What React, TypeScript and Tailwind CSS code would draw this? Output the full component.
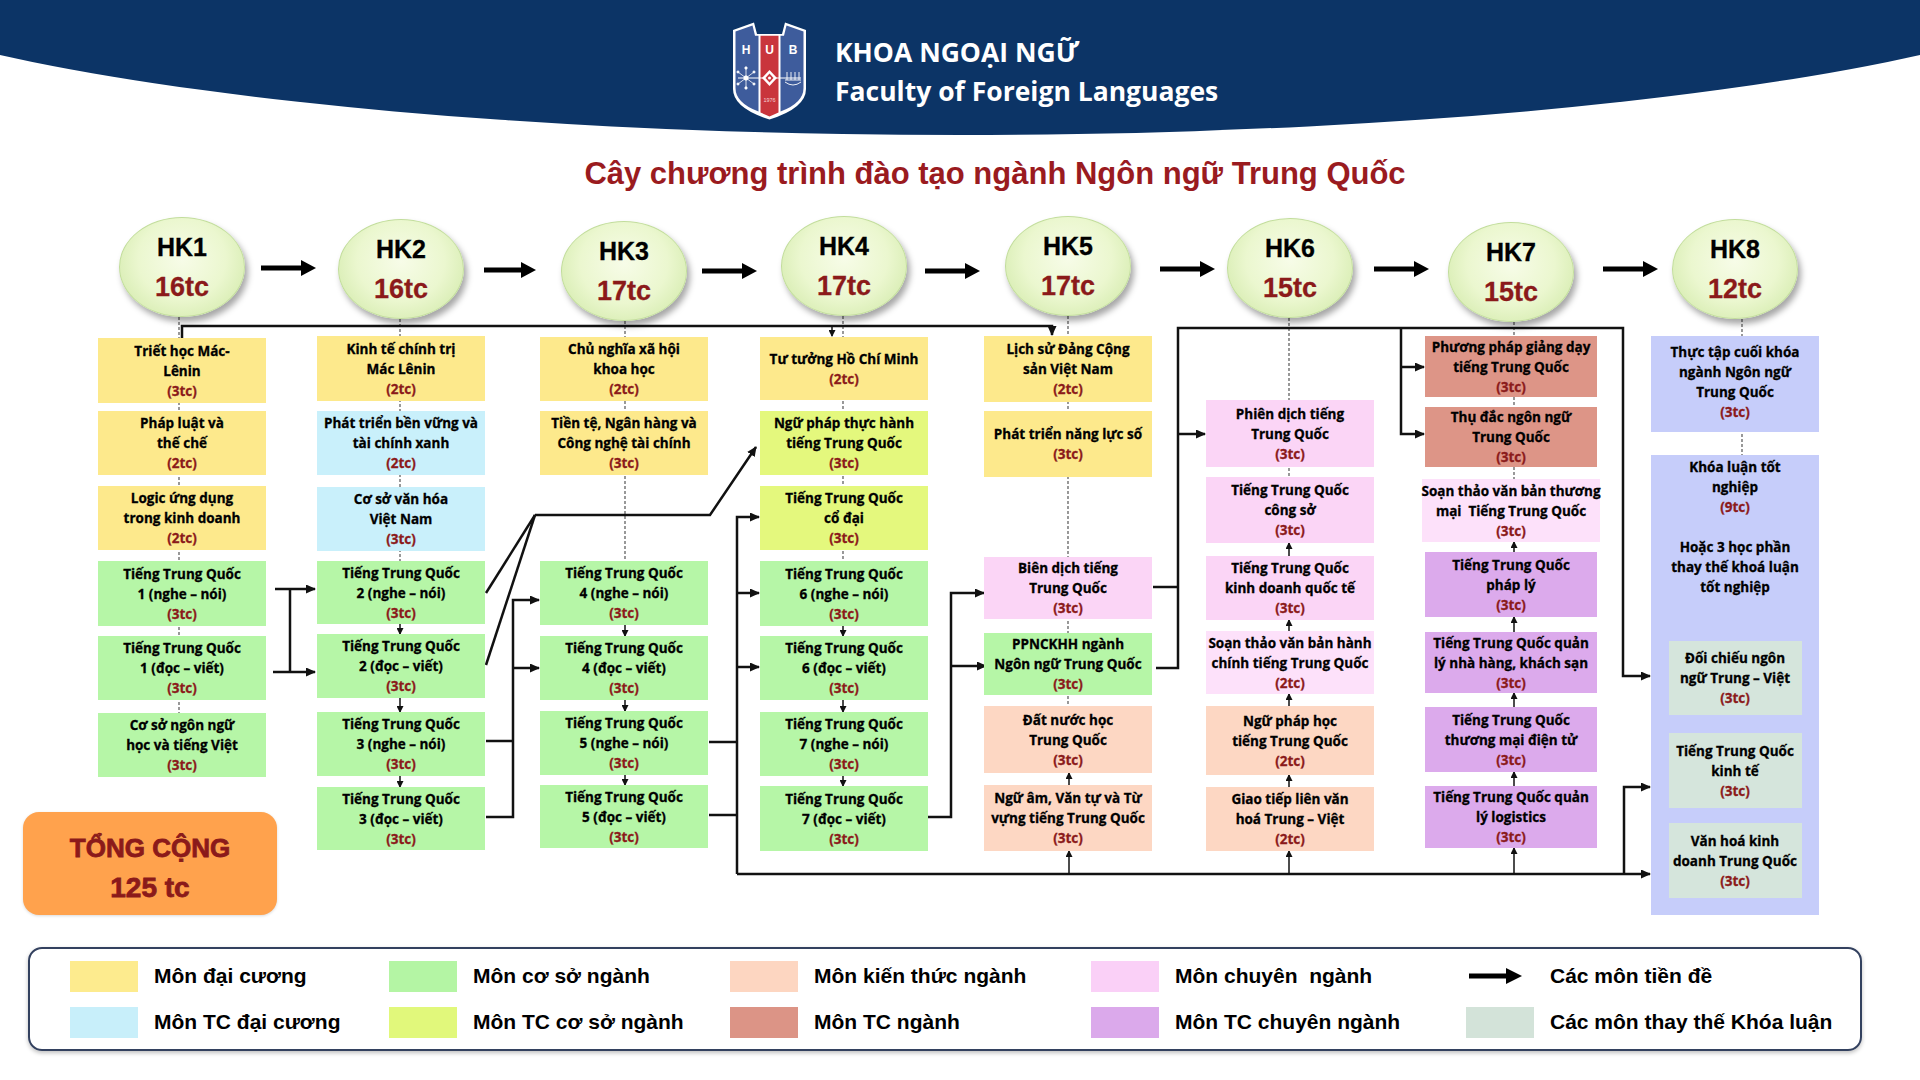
import React from "react";

type Box = { lines: string[]; tc: string; color: string; cls: string };
type Col = { ml: string; w: string; hkMt: string; hk: string; tcHk: string; boxes: Box[] };

const Y = "bg-[#fde98c]";
const B = "bg-[#c9f0fb]";
const G = "bg-[#b6f6a7]";
const YG = "bg-[#e4f87d]";
const P = "bg-[#fdd7c3]";
const R = "bg-[#dd9587]";
const PK = "bg-[#fbd5f6]";
const LPK = "bg-[#fde1fa]";
const PU = "bg-[#dcaaec]";

const TTQ = "Tiếng Trung Quốc";

const cols: Col[] = [
  {
    ml: "ml-[98px]", w: "w-[168px]", hkMt: "mt-[1px]", hk: "HK1", tcHk: "16tc",
    boxes: [
      { lines: ["Triết học Mác-", "Lênin"], tc: "(3tc)", color: Y, cls: "mt-[21px] h-[65px]" },
      { lines: ["Pháp luật và", "thế chế"], tc: "(2tc)", color: Y, cls: "mt-[8px] h-[64px]" },
      { lines: ["Logic ứng dụng", "trong kinh doanh"], tc: "(2tc)", color: Y, cls: "mt-[11px] h-[64px]" },
      { lines: [TTQ, "1 (nghe – nói)"], tc: "(3tc)", color: G, cls: "mt-[11px] h-[65px]" },
      { lines: [TTQ, "1 (đọc – viết)"], tc: "(3tc)", color: G, cls: "mt-[10px] h-[64px]" },
      { lines: ["Cơ sở ngôn ngữ", "học và tiếng Việt"], tc: "(3tc)", color: G, cls: "mt-[13px] h-[64px]" },
    ],
  },
  {
    ml: "ml-[51px]", w: "w-[168px]", hkMt: "mt-[3px]", hk: "HK2", tcHk: "16tc",
    boxes: [
      { lines: ["Kinh tế chính trị", "Mác Lênin"], tc: "(2tc)", color: Y, cls: "mt-[17px] h-[65px]" },
      { lines: ["Phát triển bền vững và", "tài chính xanh"], tc: "(2tc)", color: B, cls: "mt-[10px] h-[64px]" },
      { lines: ["Cơ sở văn hóa", "Việt Nam"], tc: "(3tc)", color: B, cls: "mt-[12px] h-[64px]" },
      { lines: [TTQ, "2 (nghe – nói)"], tc: "(3tc)", color: G, cls: "mt-[10px] h-[63px]" },
      { lines: [TTQ, "2 (đọc – viết)"], tc: "(3tc)", color: G, cls: "mt-[10px] h-[64px]" },
      { lines: [TTQ, "3 (nghe – nói)"], tc: "(3tc)", color: G, cls: "mt-[14px] h-[64px]" },
      { lines: [TTQ, "3 (đọc – viết)"], tc: "(3tc)", color: G, cls: "mt-[11px] h-[63px]" },
    ],
  },
  {
    ml: "ml-[55px]", w: "w-[168px]", hkMt: "mt-[5px]", hk: "HK3", tcHk: "17tc",
    boxes: [
      { lines: ["Chủ nghĩa xã hội", "khoa học"], tc: "(2tc)", color: Y, cls: "mt-[16px] h-[64px]" },
      { lines: ["Tiền tệ, Ngân hàng và", "Công nghệ tài chính"], tc: "(3tc)", color: Y, cls: "mt-[10px] h-[64px]" },
      { lines: [TTQ, "4 (nghe – nói)"], tc: "(3tc)", color: G, cls: "mt-[86px] h-[64px]" },
      { lines: [TTQ, "4 (đọc – viết)"], tc: "(3tc)", color: G, cls: "mt-[11px] h-[64px]" },
      { lines: [TTQ, "5 (nghe – nói)"], tc: "(3tc)", color: G, cls: "mt-[11px] h-[64px]" },
      { lines: [TTQ, "5 (đọc – viết)"], tc: "(3tc)", color: G, cls: "mt-[10px] h-[63px]" },
    ],
  },
  {
    ml: "ml-[52px]", w: "w-[168px]", hkMt: "mt-[0px]", hk: "HK4", tcHk: "17tc",
    boxes: [
      { lines: ["Tư tưởng Hồ Chí Minh"], tc: "(2tc)", color: Y, cls: "mt-[21px] h-[63px]" },
      { lines: ["Ngữ pháp thực hành", "tiếng Trung Quốc"], tc: "(3tc)", color: YG, cls: "mt-[11px] h-[64px]" },
      { lines: [TTQ, "cổ đại"], tc: "(3tc)", color: YG, cls: "mt-[11px] h-[64px]" },
      { lines: [TTQ, "6 (nghe – nói)"], tc: "(3tc)", color: G, cls: "mt-[11px] h-[65px]" },
      { lines: [TTQ, "6 (đọc – viết)"], tc: "(3tc)", color: G, cls: "mt-[10px] h-[64px]" },
      { lines: [TTQ, "7 (nghe – nói)"], tc: "(3tc)", color: G, cls: "mt-[12px] h-[64px]" },
      { lines: [TTQ, "7 (đọc – viết)"], tc: "(3tc)", color: G, cls: "mt-[10px] h-[65px]" },
    ],
  },
  {
    ml: "ml-[56px]", w: "w-[168px]", hkMt: "mt-[0px]", hk: "HK5", tcHk: "17tc",
    boxes: [
      { lines: ["Lịch sử Đảng Cộng", "sản Việt Nam"], tc: "(2tc)", color: Y, cls: "mt-[20px] h-[66px]" },
      { lines: ["Phát triển năng lực số"], tc: "(3tc)", color: Y, cls: "mt-[9px] h-[66px]" },
      { lines: ["Biên dịch tiếng", "Trung Quốc"], tc: "(3tc)", color: PK, cls: "mt-[80px] h-[62px]" },
      { lines: ["PPNCKHH ngành", "Ngôn ngữ Trung Quốc"], tc: "(3tc)", color: G, cls: "mt-[14px] h-[62px]" },
      { lines: ["Đất nước học", "Trung Quốc"], tc: "(3tc)", color: P, cls: "mt-[11px] h-[67px]" },
      { lines: ["Ngữ âm, Văn tự và Từ", "vựng tiếng Trung Quốc"], tc: "(3tc)", color: P, cls: "mt-[12px] h-[66px]" },
    ],
  },
  {
    ml: "ml-[54px]", w: "w-[168px]", hkMt: "mt-[2px]", hk: "HK6", tcHk: "15tc",
    boxes: [
      { lines: ["Phiên dịch tiếng", "Trung Quốc"], tc: "(3tc)", color: PK, cls: "mt-[82px] h-[67px]" },
      { lines: [TTQ, "công sở"], tc: "(3tc)", color: PK, cls: "mt-[10px] h-[66px]" },
      { lines: [TTQ, "kinh doanh quốc tế"], tc: "(3tc)", color: PK, cls: "mt-[13px] h-[64px]" },
      { lines: ["Soạn thảo văn bản hành", "chính tiếng Trung Quốc"], tc: "(2tc)", color: LPK, cls: "mt-[11px] h-[63px]" },
      { lines: ["Ngữ pháp học", "tiếng Trung Quốc"], tc: "(2tc)", color: P, cls: "mt-[12px] h-[69px]" },
      { lines: ["Giao tiếp liên văn", "hoá Trung – Việt"], tc: "(2tc)", color: P, cls: "mt-[12px] h-[64px]" },
    ],
  },
  {
    ml: "ml-[51px]", w: "w-[172px]", hkMt: "mt-[6px]", hk: "HK7", tcHk: "15tc",
    boxes: [
      { lines: ["Phương pháp giảng dạy", "tiếng Trung Quốc"], tc: "(3tc)", color: R, cls: "mt-[14px] h-[61px]" },
      { lines: ["Thụ đắc ngôn ngữ", "Trung Quốc"], tc: "(3tc)", color: R, cls: "mt-[10px] h-[60px]" },
      { lines: ["Soạn thảo văn bản thương", "mại  Tiếng Trung Quốc"], tc: "(3tc)", color: LPK, cls: "mt-[12px] h-[63px] mx-[-3px]" },
      { lines: [TTQ, "pháp lý"], tc: "(3tc)", color: PU, cls: "mt-[10px] h-[65px]" },
      { lines: ["Tiếng Trung Quốc quản", "lý nhà hàng, khách sạn"], tc: "(3tc)", color: PU, cls: "mt-[15px] h-[61px]" },
      { lines: [TTQ, "thương mại điện tử"], tc: "(3tc)", color: PU, cls: "mt-[14px] h-[65px]" },
      { lines: ["Tiếng Trung Quốc quản", "lý logistics"], tc: "(3tc)", color: PU, cls: "mt-[14px] h-[62px]" },
    ],
  },
];

function Cell({ b }: { b: Box }) {
  return (
    <div className={`${b.color} ${b.cls} shrink-0 flex flex-col items-center justify-center text-center`}>
      {b.lines.map((l, i) => (
        <div key={i} className="whitespace-pre">{l}</div>
      ))}
      <div className="text-[#8b1a1a]">{b.tc}</div>
    </div>
  );
}

function HK({ mt, hk, tc }: { mt: string; hk: string; tc: string }) {
  return (
    <div
      className={`${mt} self-center w-[126px] h-[100px] shrink-0 rounded-[50%] border border-[#c2dd9c] flex flex-col items-center justify-center bg-[radial-gradient(ellipse_at_50%_42%,#f7fce8_0%,#ebf7cf_50%,#cbe6a0_100%)] shadow-[3px_5px_6px_rgba(0,0,0,0.35)] font-['Liberation_Sans',Arial,sans-serif]`}
    >
      <div className="text-[25px] leading-[40px] font-bold text-black">{hk}</div>
      <div className="text-[27px] leading-[40px] font-bold text-[#8b1a1a]">{tc}</div>
    </div>
  );
}

function Logo() {
  return (
    <svg width="75" height="98" viewBox="0 0 75 98" className="shrink-0">
      <path d="M1 8 L22 0.5 L25 12 L50 12 L53 0.5 L74 8 L74 67 Q74 86 37.5 97.5 Q1 86 1 67 Z" fill="#ffffff" />
      <path d="M3.5 9.6 L20.5 3.6 L23 13.8 L26.5 13.8 L26.5 89.5 Q3.5 81 3.5 66 Z" fill="#3e5c9c" />
      <path d="M71.5 9.6 L54.5 3.6 L52 13.8 L48.5 13.8 L48.5 89.5 Q71.5 81 71.5 66 Z" fill="#3e5c9c" />
      <path d="M28.5 13.8 L46.5 13.8 L46.5 90.5 L37.5 94.5 L28.5 90.5 Z" fill="#c9353c" />
      <text x="14" y="32" textAnchor="middle" fontSize="12" fontWeight="700" fill="#fff" fontFamily="Liberation Sans, Arial, sans-serif">H</text>
      <text x="37.5" y="32" textAnchor="middle" fontSize="12" fontWeight="700" fill="#fff" fontFamily="Liberation Sans, Arial, sans-serif">U</text>
      <text x="61" y="32" textAnchor="middle" fontSize="12" fontWeight="700" fill="#fff" fontFamily="Liberation Sans, Arial, sans-serif">B</text>
      <line x1="6" y1="56" x2="69" y2="56" stroke="#fff" strokeWidth="1" />
      <g stroke="#fff" strokeWidth="0.8" fill="none">
        <line x1="14" y1="46" x2="14" y2="66" />
        <line x1="6" y1="50" x2="22" y2="62" />
        <line x1="6" y1="62" x2="22" y2="50" />
        <circle cx="14" cy="56" r="2.2" fill="#fff" />
        <circle cx="14" cy="46" r="1.2" fill="#fff" />
        <circle cx="14" cy="66" r="1.2" fill="#fff" />
        <circle cx="6" cy="50" r="1.1" fill="#fff" />
        <circle cx="22" cy="62" r="1.1" fill="#fff" />
        <circle cx="6" cy="62" r="1.1" fill="#fff" />
        <circle cx="22" cy="50" r="1.1" fill="#fff" />
      </g>
      <path d="M37.5 48 L45 56 L37.5 64 L30 56 Z" fill="#fff" />
      <path d="M37.5 51.5 L41.5 56 L37.5 60.5 L33.5 56 Z" fill="#c9353c" />
      <circle cx="37.5" cy="56" r="1.5" fill="#fff" />
      <g stroke="#fff" strokeWidth="0.9" fill="none">
        <line x1="55" y1="50" x2="55" y2="58" />
        <line x1="59" y1="50" x2="59" y2="58" />
        <line x1="63" y1="50" x2="63" y2="58" />
        <line x1="67" y1="50" x2="67" y2="58" />
        <line x1="53" y1="58" x2="69" y2="58" />
        <path d="M53 60 Q61 66 69 60" />
      </g>
      <text x="37.5" y="80" textAnchor="middle" fontSize="5.5" fill="#f3d3d5" fontFamily="Liberation Sans, Arial, sans-serif">1976</text>
    </svg>
  );
}

function Connectors() {
  const big = { stroke: "#111", strokeWidth: 2.5, fill: "none" } as const;
  const small = { stroke: "#111", strokeWidth: 1.5, fill: "none" } as const;
  const bigPaths = [
    "M182 338 V326 H1052 V335",
    "M275 589 H315",
    "M290 589 V672",
    "M273 672 H315",
    "M486 593 L535 515",
    "M486 665 L535 515",
    "M535 515 H710 L756 447",
    "M486 741 H513",
    "M486 817 H513 V600 H539",
    "M513 668 H539",
    "M709 742 H737",
    "M709 815 H737",
    "M737 874 V517 H759",
    "M737 593 H759",
    "M737 667 H759",
    "M737 874 H1650",
    "M928 817 H951 V593 H984",
    "M951 666 H986",
    "M1153 587 H1178",
    "M1156 668 H1178 V328 H1623 V676 H1650",
    "M1178 434 H1205",
    "M1401 328 V434 H1424",
    "M1401 367 H1424",
    "M1624 874 V787 H1650",
  ];
  const arrowed = new Set([0, 1, 3, 6, 8, 9, 12, 13, 14, 15, 16, 17, 19, 20, 21, 22, 23]);
  const smallPaths = [
    "M832 326 V336",
    "M1069 874 V851",
    "M1289 874 V851",
    "M1514 874 V848",
    "M400 624 V634", "M400 698 V712", "M400 776 V787",
    "M625 625 V636", "M625 700 V711", "M625 775 V785",
    "M843 626 V636", "M843 700 V712", "M843 776 V786",
    "M1069 785 V773",
    "M1289 556 V543", "M1289 631 V620", "M1289 706 V694", "M1289 787 V775",
    "M1514 552 V542", "M1514 632 V617", "M1514 707 V693", "M1514 786 V772",
  ];
  const dashed = [
    "M179 317 V713", "M400 319 V561", "M625 321 V561", "M843 316 V561",
    "M1068 316 V706", "M1289 318 V477", "M1514 322 V479", "M1742 319 V455",
  ];
  const hkArrows: [number, number, number][] = [
    [261, 316, 268], [484, 536, 270], [702, 757, 271], [925, 980, 271],
    [1160, 1215, 269], [1374, 1429, 269], [1603, 1658, 269],
  ];
  return (
    <svg className="absolute left-0 top-0" width="1920" height="731" viewBox="0 216 1920 731">
      <defs>
        <marker id="ah" markerWidth="10" markerHeight="9" refX="9" refY="4.5" orient="auto" markerUnits="userSpaceOnUse">
          <path d="M0 0 L10 4.5 L0 9 Z" fill="#111" />
        </marker>
        <marker id="as" markerWidth="7" markerHeight="7" refX="6" refY="3.5" orient="auto" markerUnits="userSpaceOnUse">
          <path d="M0 0 L7 3.5 L0 7 Z" fill="#111" />
        </marker>
      </defs>
      {dashed.map((d, i) => (
        <path key={"d" + i} d={d} stroke="#555" strokeWidth={1.2} strokeDasharray="3 2" fill="none" />
      ))}
      {bigPaths.map((d, i) => (
        <path key={"b" + i} d={d} {...big} markerEnd={arrowed.has(i) ? "url(#ah)" : undefined} />
      ))}
      {smallPaths.map((d, i) => (
        <path key={"s" + i} d={d} {...small} markerEnd="url(#as)" />
      ))}
      {hkArrows.map(([x1, x2, y], i) => (
        <g key={"h" + i}>
          <line x1={x1} y1={y} x2={x2 - 12} y2={y} stroke="#000" strokeWidth={5} />
          <path d={`M${x2 - 15} ${y - 8} L${x2} ${y} L${x2 - 15} ${y + 8} Z`} fill="#000" />
        </g>
      ))}
    </svg>
  );
}

const legend: { label: string; color?: string; arrow?: boolean }[] = [
  { label: "Môn đại cương", color: "bg-[#fdeb8e]" },
  { label: "Môn cơ sở ngành", color: "bg-[#b4f5a4]" },
  { label: "Môn kiến thức ngành", color: "bg-[#fdd6c1]" },
  { label: "Môn chuyên  ngành", color: "bg-[#fad0f7]" },
  { label: "Các môn tiền đề", arrow: true },
  { label: "Môn TC đại cương", color: "bg-[#c8effa]" },
  { label: "Môn TC cơ sở ngành", color: "bg-[#e1f87b]" },
  { label: "Môn TC ngành", color: "bg-[#dc9486]" },
  { label: "Môn TC chuyên ngành", color: "bg-[#dba9eb]" },
  { label: "Các môn thay thế Khóa luận", color: "bg-[#d3e3d9]" },
];

export default function App() {
  return (
    <div className="relative w-[1920px] h-[1080px] overflow-hidden bg-white font-['Open_Sans',sans-serif]">
      {/* Header */}
      <header className="relative h-[135px]">
        <div className="absolute left-[-240px] top-[-200px] w-[2400px] h-[335px] bg-[#0c3466] rounded-b-[1200px_200px]" />
        <div className="relative flex items-center pl-[732px] pt-[22px]">
          <Logo />
          <div className="ml-[28px] flex flex-col text-white font-bold text-[26.5px] leading-[39px] mt-[2px]">
            <div>KHOA NGOẠI NGỮ</div>
            <div>Faculty of Foreign Languages</div>
          </div>
        </div>
      </header>

      {/* Title */}
      <h1 className="mt-[21px] h-[36px] leading-[36px] text-center pl-[70px] text-[31px] font-bold text-[#9a1b1f] font-['Liberation_Sans',Arial,sans-serif]">
        Cây chương trình đào tạo ngành Ngôn ngữ Trung Quốc
      </h1>

      {/* Diagram */}
      <div className="relative mt-[24px] h-[731px] w-[1920px]">
        <Connectors />
        <div className="relative flex items-start text-[13.5px] leading-[20px] font-bold text-black [-webkit-text-stroke:0.3px]">
          {cols.map((c, ci) => (
            <div key={ci} className={`${c.ml} ${c.w} shrink-0 flex flex-col`}>
              <HK mt={c.hkMt} hk={c.hk} tc={c.tcHk} />
              {c.boxes.map((b, bi) => (
                <Cell key={bi} b={b} />
              ))}
              {ci === 0 && (
                <div className="mt-[35px] h-[103px] ml-[-75px] mr-[-11px] pt-[8px] rounded-[16px] bg-[#ffa24d] flex flex-col items-center justify-center text-[#8b1a1a] font-bold font-['Liberation_Sans',Arial,sans-serif] [-webkit-text-stroke:0.8px] shadow-[0_1px_3px_rgba(0,0,0,0.15)]">
                  <div className="text-[26px] leading-[40px] font-bold">TỔNG CỘNG</div>
                  <div className="text-[28px] leading-[40px] font-bold">125 tc</div>
                </div>
              )}
            </div>
          ))}
          {/* HK8 column */}
          <div className="ml-[54px] w-[168px] shrink-0 flex flex-col">
            <HK mt="mt-[3px]" hk="HK8" tc="12tc" />
            <div className="mt-[17px] h-[96px] bg-[#c6cdfa] flex flex-col items-center justify-center text-center leading-[20px] pb-[4px]">
              <div>Thực tập cuối khóa</div>
              <div>ngành Ngôn ngữ</div>
              <div>Trung Quốc</div>
              <div className="text-[#8b1a1a]">(3tc)</div>
            </div>
            <div className="mt-[23px] h-[460px] bg-[#c6cdfa] flex flex-col items-center text-center leading-[20px] pt-[2px]">
              <div>Khóa luận tốt</div>
              <div>nghiệp</div>
              <div className="text-[#8b1a1a]">(9tc)</div>
              <div className="mt-[20px]">Hoặc 3 học phần</div>
              <div>thay thế khoá luận</div>
              <div>tốt nghiệp</div>
              <div className="mt-[44px] w-[133px] h-[74px] bg-[#d5e5dc] flex flex-col items-center justify-center">
                <div>Đối chiếu ngôn</div>
                <div>ngữ Trung – Việt</div>
                <div className="text-[#8b1a1a]">(3tc)</div>
              </div>
              <div className="mt-[18px] w-[133px] h-[75px] bg-[#d5e5dc] flex flex-col items-center justify-center">
                <div>{TTQ}</div>
                <div>kinh tế</div>
                <div className="text-[#8b1a1a]">(3tc)</div>
              </div>
              <div className="mt-[15px] w-[133px] h-[75px] bg-[#d5e5dc] flex flex-col items-center justify-center">
                <div>Văn hoá kinh</div>
                <div>doanh Trung Quốc</div>
                <div className="text-[#8b1a1a]">(3tc)</div>
              </div>
            </div>
          </div>
        </div>
      </div>

      {/* Legend */}
      <div className="ml-[28px] w-[1834px] h-[104px] rounded-[14px] border-2 border-[#33415f] shadow-[0_2px_4px_rgba(0,0,0,0.25)] grid grid-cols-[319px_341px_361px_375px_1fr] grid-rows-[46px_46px] pt-[4px] pl-[40px] items-center font-['Liberation_Sans',Arial,sans-serif] text-[21px] font-bold text-black">
        {legend.map((it, i) => (
          <div key={i} className="flex items-center">
            {it.arrow ? (
              <div className="w-[68px] h-[31px] flex items-center pl-[3px]">
                <svg width="53" height="18" viewBox="0 0 53 18">
                  <line x1="0" y1="9" x2="40" y2="9" stroke="#000" strokeWidth="5" />
                  <path d="M37 1 L53 9 L37 17 Z" fill="#000" />
                </svg>
              </div>
            ) : (
              <div className={`${it.color} w-[68px] h-[31px] shrink-0`} />
            )}
            <div className="ml-[16px] whitespace-pre">{it.label}</div>
          </div>
        ))}
      </div>
    </div>
  );
}
